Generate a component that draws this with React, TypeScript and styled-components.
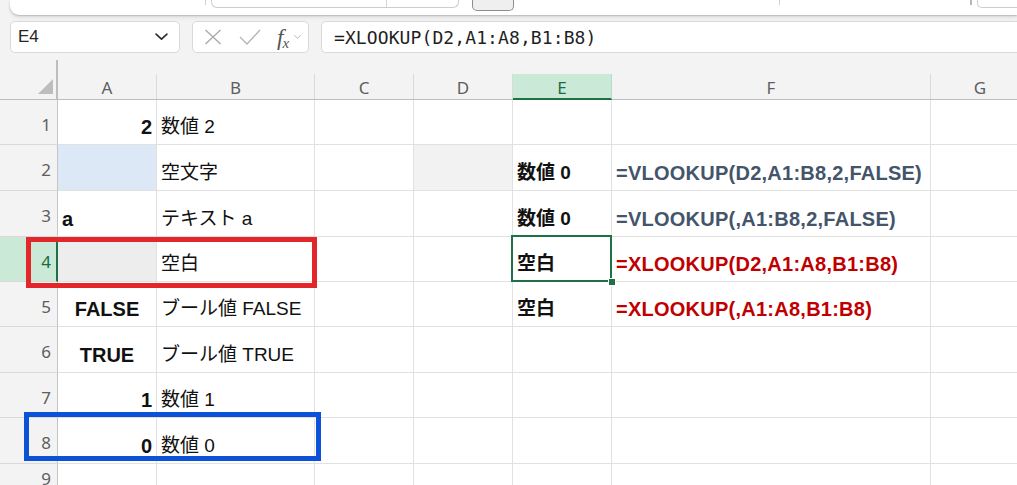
import React from "react";
import styled, { createGlobalStyle, css } from "styled-components";

const Global = createGlobalStyle`
  html, body {
    margin: 0;
    padding: 0;
    background: #f3f3f3;
    overflow: hidden;
  }
  body {
    width: 1017px;
    height: 485px;
    font-family: "Liberation Sans", "Noto Sans CJK JP", sans-serif;
  }
`;

const Page = styled.div`
  display: flex;
  flex-direction: column;
  width: 1017px;
  height: 485px;
  overflow: hidden;
`;

/* ---------- ribbon strip at the very top ---------- */
const Ribbon = styled.div`
  display: flex;
  align-items: flex-start;
  height: 15px;
  margin-left: 10px;
  background: #ffffff;
  border-bottom-left-radius: 9px;
  box-shadow: 0 1px 2px rgba(0, 0, 0, 0.22), 0 3px 5px rgba(0, 0, 0, 0.06);
  flex-shrink: 0;
`;

const RibbonDivider = styled.div<{ $at: number; $strong?: boolean }>`
  margin-left: ${(p) => p.$at}px;
  width: ${(p) => (p.$strong ? 2 : 1)}px;
  height: 5px;
  background: ${(p) => (p.$strong ? "#b8b8b8" : "#cfcfcf")};
`;

const RibbonField = styled.div<{ $at: number; $w: number; $open?: boolean }>`
  display: flex;
  margin-left: ${(p) => p.$at}px;
  width: ${(p) => p.$w}px;
  height: 7px;
  border: 1px solid #cdcdcd;
  border-top: none;
  border-radius: ${(p) => (p.$open ? "0 0 0 5px" : "0 0 6px 6px")};
  ${(p) =>
    p.$open &&
    css`
      border-right: none;
    `}
`;

const FieldSplit = styled.div<{ $at: number }>`
  margin-left: ${(p) => p.$at}px;
  width: 1px;
  background: #d6d6d6;
`;

const RibbonButton = styled.div<{ $at: number }>`
  margin-left: ${(p) => p.$at}px;
  width: 41px;
  height: 10px;
  background: #efefef;
  border: 1px solid #8d8d8d;
  border-top: none;
  border-radius: 0 0 5px 5px;
`;

/* ---------- formula bar ---------- */
const FormulaBar = styled.div`
  display: flex;
  gap: 12px;
  height: 32px;
  margin-top: 6px;
  padding-left: 10px;
  flex-shrink: 0;
`;

const BarBox = styled.div<{ $w?: number; $grow?: boolean }>`
  display: flex;
  align-items: center;
  box-sizing: border-box;
  height: 32px;
  background: #ffffff;
  border: 1px solid #d9d9d9;
  border-radius: 5px;
  ${(p) => (p.$w ? `width: ${p.$w}px;` : "")}
  ${(p) =>
    p.$grow &&
    css`
      flex: 1;
      border-right: none;
      border-radius: 5px 0 0 5px;
    `}
`;

const NameText = styled.span`
  flex: 1;
  padding-left: 7px;
  font-family: "Liberation Sans", sans-serif;
  font-size: 17px;
  color: #242424;
`;

const IconSlot = styled.span<{ $ml: number; $mr?: number }>`
  display: flex;
  margin-left: ${(p) => p.$ml}px;
  margin-right: ${(p) => p.$mr ?? 0}px;
`;

const FxMark = styled.span`
  display: flex;
  align-items: flex-end;
  margin-left: 16px;
  font-family: "Liberation Serif", serif;
  font-style: italic;
  color: #555;
  line-height: 1;
  i {
    font-size: 23px;
  }
  small {
    font-size: 15px;
    margin-left: -1px;
    margin-bottom: -2px;
  }
`;

const FormulaText = styled.span`
  padding-left: 12px;
  font-family: "DejaVu Sans Mono", "Liberation Mono", monospace;
  font-size: 18px;
  color: #1f1f1f;
  letter-spacing: 0.1px;
`;

/* ---------- sheet grid ---------- */
const Sheet = styled.div`
  position: relative;
  display: grid;
  grid-template-columns: 58px 99px 158px 99px 99px 99px 319px 99px 60px;
  grid-template-rows: 40px 45px 46px 46px 45px 45px 46px 45px 46px 25px;
  margin-top: 7px;
`;

const Corner = styled.div`
  position: relative;
  box-sizing: border-box;
  border-right: 2px solid #bdbdbd;
  border-bottom: 1px solid #bdbdbd;
  &::after {
    content: "";
    position: absolute;
    right: 3px;
    bottom: 5px;
    width: 0;
    height: 0;
    border-left: 15px solid transparent;
    border-bottom: 15px solid #bdbdbd;
  }
`;

const ColHeader = styled.div`
  display: flex;
  align-items: flex-end;
  border-bottom: 1px solid #bdbdbd;
  box-sizing: border-box;
`;

const ColLabel = styled.div<{ $active?: boolean }>`
  display: flex;
  align-items: center;
  justify-content: center;
  box-sizing: border-box;
  width: 100%;
  height: 25px;
  border-right: 1px solid #dadada;
  font-family: "Noto Sans", sans-serif;
  font-size: 17px;
  color: #5e5e5e;
  padding-top: 1px;
  ${(p) =>
    p.$active &&
    css`
      background: #caead7;
      color: #1c6b40;
      border-bottom: 2px solid #1e7145;
      border-right-color: #b9dcc7;
      margin-bottom: -1px;
      height: 26px;
      padding-top: 2px;
    `}
`;

const RowHeader = styled.div<{ $active?: boolean }>`
  display: flex;
  align-items: center;
  justify-content: flex-end;
  box-sizing: border-box;
  padding: 5px 6px 0 0;
  border-right: 1px solid #c4c4c4;
  border-bottom: 1px solid #d9d9d9;
  font-family: "Noto Sans", sans-serif;
  font-size: 17px;
  line-height: 20px;
  color: #5e5e5e;
  ${(p) =>
    p.$active &&
    css`
      background: #caead7;
      color: #1c6b40;
      border-right: 2px solid #1e7145;
      padding-right: 5px;
    `}
`;

type Align = "left" | "right" | "center";
type Tone = "ink" | "slate" | "red";
type Fill = "none" | "blue" | "gray" | "pale";

const tones: Record<Tone, string> = {
  ink: "#111111",
  slate: "#44546a",
  red: "#c00000",
};

const fills: Record<Fill, string> = {
  none: "#ffffff",
  blue: "#dce8f5",
  gray: "#ededed",
  pale: "#f2f2f2",
};

const Cell = styled.div<{
  $align: Align;
  $bold?: boolean;
  $tone: Tone;
  $fill: Fill;
  $size: number;
  $track: number;
}>`
  display: flex;
  align-items: flex-end;
  justify-content: ${(p) =>
    p.$align === "left" ? "flex-start" : p.$align === "right" ? "flex-end" : "center"};
  box-sizing: border-box;
  padding: 0 4px 7px 4px;
  background: ${(p) => fills[p.$fill]};
  border-right: 1px solid #e1e1e1;
  border-bottom: 1px solid #e1e1e1;
  font-family: "Liberation Sans", "Noto Sans CJK JP", sans-serif;
  font-size: ${(p) => p.$size}px;
  line-height: 20px;
  font-weight: ${(p) => (p.$bold ? 700 : 400)};
  letter-spacing: ${(p) => p.$track}px;
  color: ${(p) => tones[p.$tone]};
  white-space: nowrap;
`;

/* overlays drawn on top of the grid */
const Frame = styled.div<{ $color: string; $w: number }>`
  position: absolute;
  box-sizing: border-box;
  border: ${(p) => p.$w}px solid ${(p) => p.$color};
  pointer-events: none;
`;

const ActiveCell = styled.div`
  position: absolute;
  box-sizing: border-box;
  border: 2px solid #1e7145;
  pointer-events: none;
`;

const FillHandle = styled.div`
  position: absolute;
  width: 6px;
  height: 6px;
  background: #1e7145;
  outline: 1px solid #ffffff;
`;

type CellSpec = {
  text?: string;
  align?: Align;
  bold?: boolean;
  tone?: Tone;
  fill?: Fill;
  size?: number;
  track?: number;
};

type RowSpec = { n: number; cells: CellSpec[] };

const A = (text: string, align: Align): CellSpec => ({ text, align, bold: true, size: 20 });
const B = (text: string): CellSpec => ({ text, align: "left", size: 19 });
const E = (text: string): CellSpec => ({ text, align: "left", bold: true, size: 19 });
const F = (text: string, tone: Tone): CellSpec => ({
  text,
  align: "left",
  bold: true,
  tone,
  size: 20,
  track: 0.25,
});
const blank: CellSpec = {};
const empty = (n: number) => Array.from({ length: n }, () => blank);

const rows: RowSpec[] = [
  { n: 1, cells: [A("2", "right"), B("数値 2"), ...empty(6)] },
  {
    n: 2,
    cells: [
      { fill: "blue" },
      B("空文字"),
      blank,
      { fill: "pale" },
      E("数値 0"),
      F("=VLOOKUP(D2,A1:B8,2,FALSE)", "slate"),
      ...empty(2),
    ],
  },
  {
    n: 3,
    cells: [A("a", "left"), B("テキスト a"), blank, blank, E("数値 0"), F("=VLOOKUP(,A1:B8,2,FALSE)", "slate"), ...empty(2)],
  },
  {
    n: 4,
    cells: [{ fill: "gray" }, B("空白"), blank, blank, E("空白"), F("=XLOOKUP(D2,A1:A8,B1:B8)", "red"), ...empty(2)],
  },
  {
    n: 5,
    cells: [A("FALSE", "center"), B("ブール値 FALSE"), blank, blank, E("空白"), F("=XLOOKUP(,A1:A8,B1:B8)", "red"), ...empty(2)],
  },
  { n: 6, cells: [A("TRUE", "center"), B("ブール値 TRUE"), ...empty(6)] },
  { n: 7, cells: [A("1", "right"), B("数値 1"), ...empty(6)] },
  { n: 8, cells: [A("0", "right"), B("数値 0"), ...empty(6)] },
  { n: 9, cells: empty(8) },
];

/* the last track is the sliver of the next column at the window edge */
const columns = ["A", "B", "C", "D", "E", "F", "G", ""];
const activeCol = "E";
const activeRow = 4;

const Chevron = ({ size, color, w }: { size: number; color: string; w: number }) => (
  <svg width={size} height={size * 0.55} viewBox="0 0 12 6.6" fill="none">
    <path d="M1 1l5 4.6L11 1" stroke={color} strokeWidth={w} strokeLinecap="round" strokeLinejoin="round" />
  </svg>
);

export default function App() {
  return (
    <Page>
      <Global />
      <Ribbon>
        <RibbonDivider $at={195} />
        <RibbonField $at={5} $w={254}>
          <FieldSplit $at={174} />
        </RibbonField>
        <RibbonButton $at={13} />
        <RibbonDivider $at={265} />
        <RibbonDivider $at={190} $strong />
        <RibbonField $at={5} $w={40} $open />
      </Ribbon>

      <FormulaBar>
        <BarBox $w={170}>
          <NameText>E4</NameText>
          <IconSlot $ml={0} $mr={11}>
            <Chevron size={13} color="#2b2b2b" w={1.5} />
          </IconSlot>
        </BarBox>
        <BarBox $w={117}>
          <IconSlot $ml={11}>
            <svg width="18" height="16" viewBox="0 0 18 16" fill="none">
              <path d="M1.5 1l15 14M16.5 1l-15 14" stroke="#ababab" strokeWidth="1.4" />
            </svg>
          </IconSlot>
          <IconSlot $ml={17}>
            <svg width="22" height="16" viewBox="0 0 22 16" fill="none">
              <path d="M1 8l7 7L21 1" stroke="#b5b5b5" strokeWidth="1.4" />
            </svg>
          </IconSlot>
          <FxMark>
            <i>f</i>
            <small>x</small>
          </FxMark>
          <IconSlot $ml={5}>
            <Chevron size={7} color="#a8a8a8" w={1.4} />
          </IconSlot>
        </BarBox>
        <BarBox $grow>
          <FormulaText>=XLOOKUP(D2,A1:A8,B1:B8)</FormulaText>
        </BarBox>
      </FormulaBar>

      <Sheet>
        <Corner />
        {columns.map((c, i) => (
          <ColHeader key={i}>
            <ColLabel $active={c === activeCol}>{c}</ColLabel>
          </ColHeader>
        ))}
        {rows.map((r) => (
          <React.Fragment key={r.n}>
            <RowHeader $active={r.n === activeRow}>{r.n}</RowHeader>
            {r.cells.map((c, i) => (
              <Cell
                key={i}
                $align={c.align ?? "left"}
                $bold={c.bold}
                $tone={c.tone ?? "ink"}
                $fill={c.fill ?? "none"}
                $size={c.size ?? 19}
                $track={c.track ?? 0}
              >
                {c.text}
              </Cell>
            ))}
          </React.Fragment>
        ))}

        <ActiveCell style={{ left: 511, top: 175, width: 101, height: 47 }} />
        <FillHandle style={{ left: 609, top: 219 }} />
        <Frame $color="#e3262a" $w={5} style={{ left: 26, top: 177, width: 291, height: 51 }} />
        <Frame $color="#0b52d8" $w={5} style={{ left: 24, top: 352, width: 297, height: 49 }} />
      </Sheet>
    </Page>
  );
}
